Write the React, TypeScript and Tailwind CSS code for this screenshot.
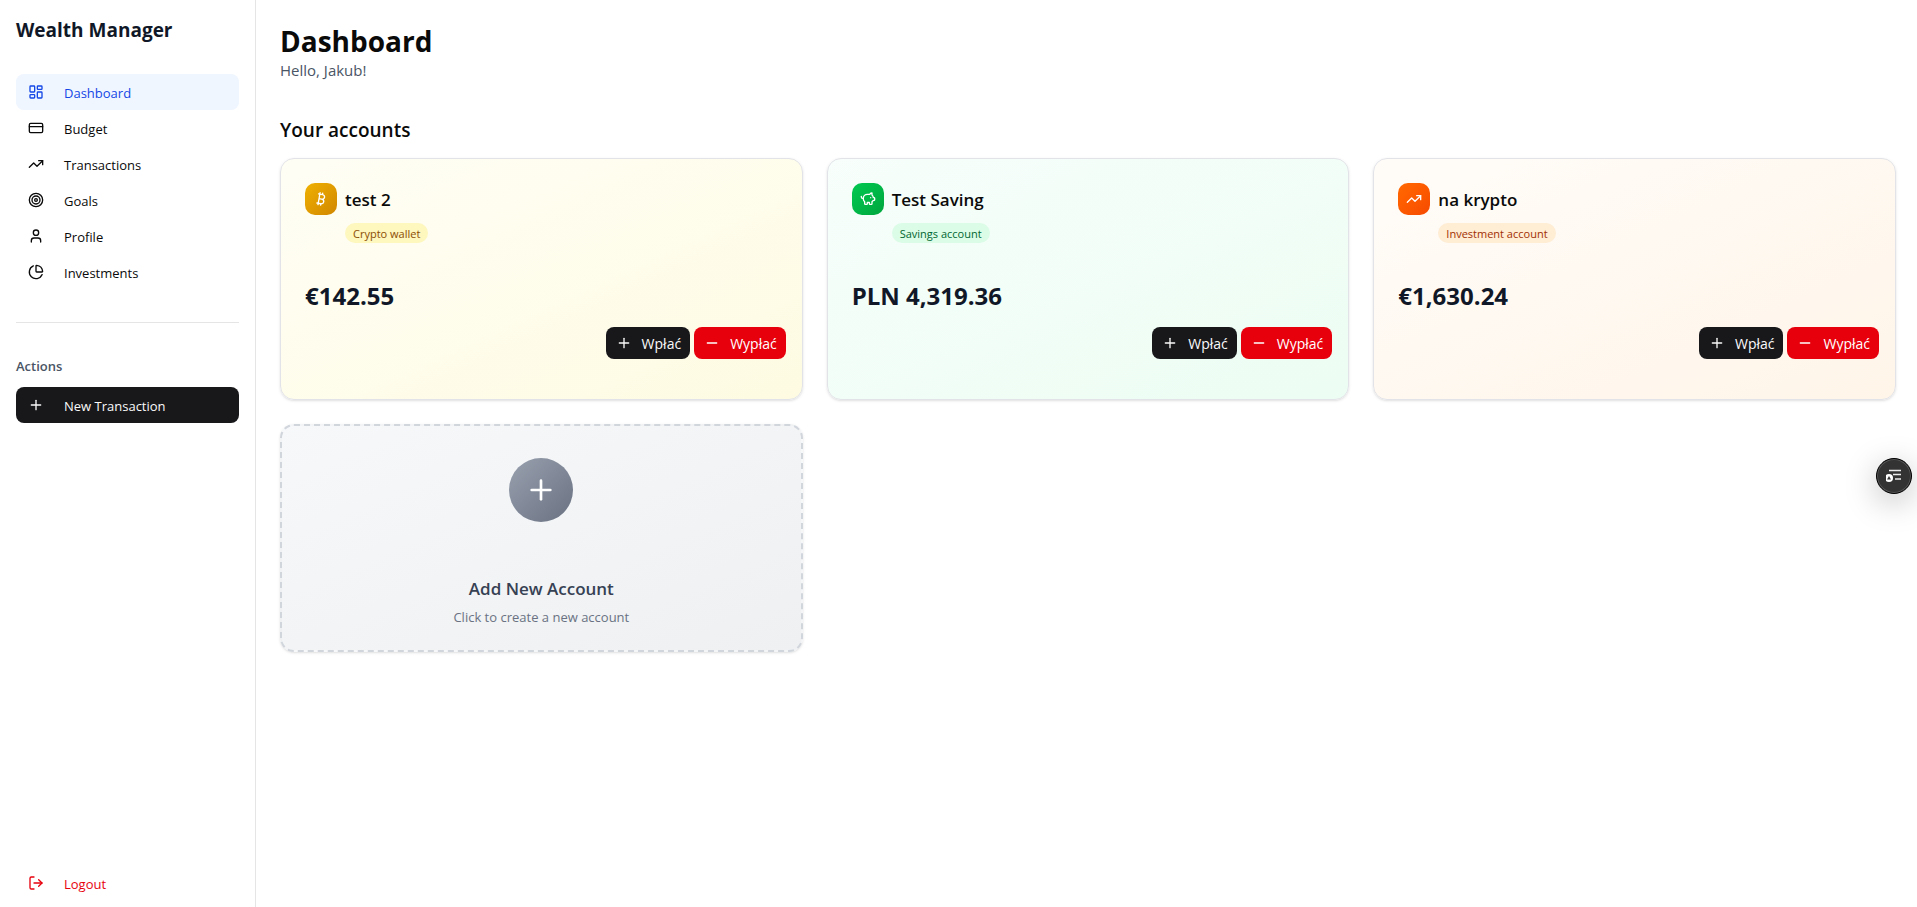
import type { LucideIcon } from "lucide-react";
import {
  Bitcoin,
  ChartPie,
  CreditCard,
  LayoutDashboard,
  LogOut,
  Minus,
  PiggyBank,
  Plus,
  Target,
  TrendingUp,
  User,
} from "lucide-react";

const navItems: { label: string; icon: LucideIcon; active?: boolean }[] = [
  { label: "Dashboard", icon: LayoutDashboard, active: true },
  { label: "Budget", icon: CreditCard },
  { label: "Transactions", icon: TrendingUp },
  { label: "Goals", icon: Target },
  { label: "Profile", icon: User },
  { label: "Investments", icon: ChartPie },
];

type Account = {
  name: string;
  type: string;
  balance: string;
  icon: LucideIcon;
  card: string;
  tile: string;
  badge: string;
};

const accounts: Account[] = [
  {
    name: "test 2",
    type: "Crypto wallet",
    balance: "€142.55",
    icon: Bitcoin,
    card: "from-[#fffef5] to-[#fefbe2]",
    tile: "from-yellow-500 to-yellow-600",
    badge: "bg-[#fef7be] text-yellow-800",
  },
  {
    name: "Test Saving",
    type: "Savings account",
    balance: "PLN 4,319.36",
    icon: PiggyBank,
    card: "from-[#f7fefb] to-[#ecfdf3]",
    tile: "from-green-500 to-green-600",
    badge: "bg-green-100 text-green-800",
  },
  {
    name: "na krypto",
    type: "Investment account",
    balance: "€1,630.24",
    icon: TrendingUp,
    card: "from-[#fffcf8] to-[#fff5e9]",
    tile: "from-orange-500 to-orange-600",
    badge: "bg-orange-100 text-orange-800",
  },
];

function Sidebar() {
  return (
    <aside className="flex w-64 shrink-0 flex-col border-r border-[#e5e5e5] px-4 pt-4 pb-1.5">
      <div className="flex h-7 items-center pt-px text-[19px] font-bold text-gray-900">Wealth Manager</div>
      <nav className="mt-[30px] flex flex-col">
        {navItems.map(({ label, icon: Icon, active }) => (
          <a
            key={label}
            href="#"
            className={`flex h-9 items-center gap-5 rounded-lg px-3 text-[13px] ${
              active ? "bg-blue-50 text-blue-700" : "text-neutral-950"
            }`}
          >
            <Icon className="size-4" />
            <span className="pt-[3px]">{label}</span>
          </a>
        ))}
      </nav>
      <hr className="my-8 border-[#e5e5e5]" />
      <h2 className="mb-2.5 text-[13px] leading-[22px] font-semibold text-gray-600">Actions</h2>
      <button
        type="button"
        className="flex h-9 items-center gap-5 rounded-lg bg-[#18181b] px-3 text-[13px] text-neutral-50"
      >
        <Plus className="size-4" />
        <span className="pt-[3px]">New Transaction</span>
      </button>
      <button type="button" className="mt-auto flex h-9 items-center gap-5 rounded-lg px-3 text-[13px] text-red-600">
        <LogOut className="size-4" />
        <span className="pt-[3px]">Logout</span>
      </button>
    </aside>
  );
}

function AccountCard({ account }: { account: Account }) {
  const Icon = account.icon;
  return (
    <article
      className={`flex flex-col rounded-[14px] border border-[#e2e3e8] bg-linear-to-br pt-6 pb-10 shadow-sm ${account.card}`}
    >
      <div className="flex items-center gap-2 px-6">
        <div className={`flex size-8 items-center justify-center rounded-[10px] bg-linear-to-br text-white ${account.tile}`}>
          <Icon className="size-4" />
        </div>
        <h3 className="pt-px text-[17px] font-semibold text-neutral-950">{account.name}</h3>
      </div>
      <div className="mt-2 flex pl-16">
        <span className={`rounded-full px-2 pt-0.5 text-[11px] leading-[18px] ${account.badge}`}>{account.type}</span>
      </div>
      <p className="mt-[37px] px-6 text-2xl leading-8 font-bold text-gray-900">{account.balance}</p>
      <div className="mt-[15px] flex justify-end gap-1 px-4 text-sm">
        <button type="button" className="flex h-8 items-center gap-2.5 rounded-lg bg-[#18181b] pr-[9px] pl-2.5 text-neutral-50">
          <Plus className="size-4" />
          <span className="pt-0.5">Wpłać</span>
        </button>
        <button type="button" className="flex h-8 items-center gap-2.5 rounded-lg bg-red-600 pr-[9px] pl-2.5 text-white">
          <Minus className="size-4" />
          <span className="pt-0.5">Wypłać</span>
        </button>
      </div>
    </article>
  );
}

export default function App() {
  return (
    <div className="relative flex min-h-screen bg-white font-['Segoe_UI','Open_Sans',sans-serif] text-neutral-950">
      <Sidebar />
      <main className="min-w-0 flex-1 py-6 pr-[21px] pl-6">
        <h1 className="text-[28px] leading-[34px] font-bold">Dashboard</h1>
        <p className="text-[15px] leading-6 text-gray-600">Hello, Jakub!</p>
        <h2 className="mt-[34px] text-[19px] leading-7 font-semibold">Your accounts</h2>
        <div className="mt-3.5 grid grid-cols-3 items-start gap-6">
          {accounts.map((account) => (
            <AccountCard key={account.name} account={account} />
          ))}
          <button
            type="button"
            className="flex flex-col items-center rounded-[14px] border-2 border-dashed border-gray-300 bg-linear-to-br from-[#f7f8fa] to-[#eef0f2] px-6 pt-8 pb-[23px] shadow-sm"
          >
            <span className="flex size-16 items-center justify-center rounded-full bg-linear-to-br from-gray-400 to-gray-500 text-white">
              <Plus className="size-8" />
            </span>
            <span className="mt-[53px] text-[17px] leading-7 font-semibold text-gray-700">Add New Account</span>
            <span className="mt-1 text-[13px] leading-5 text-gray-500">Click to create a new account</span>
          </button>
        </div>
      </main>
      <button
        type="button"
        aria-label="Open panel"
        className="absolute top-[458px] right-[5px] flex size-9 items-center justify-center rounded-full border border-black bg-[#333] text-white shadow-[0_8px_32px_rgba(0,0,0,0.25)] inset-ring inset-ring-[#555]"
      >
        <svg viewBox="0 0 16 16" className="size-4" fill="none" stroke="currentColor">
          <path d="M3 2.500h12M7 6.500h8M9 11h6" strokeWidth="1.300" opacity="0.9" />
          <circle cx="3" cy="10" r="4" fill="currentColor" stroke="none" />
          <path d="M3 8l2 3.600H1z" fill="#333" stroke="none" />
        </svg>
      </button>
    </div>
  );
}
